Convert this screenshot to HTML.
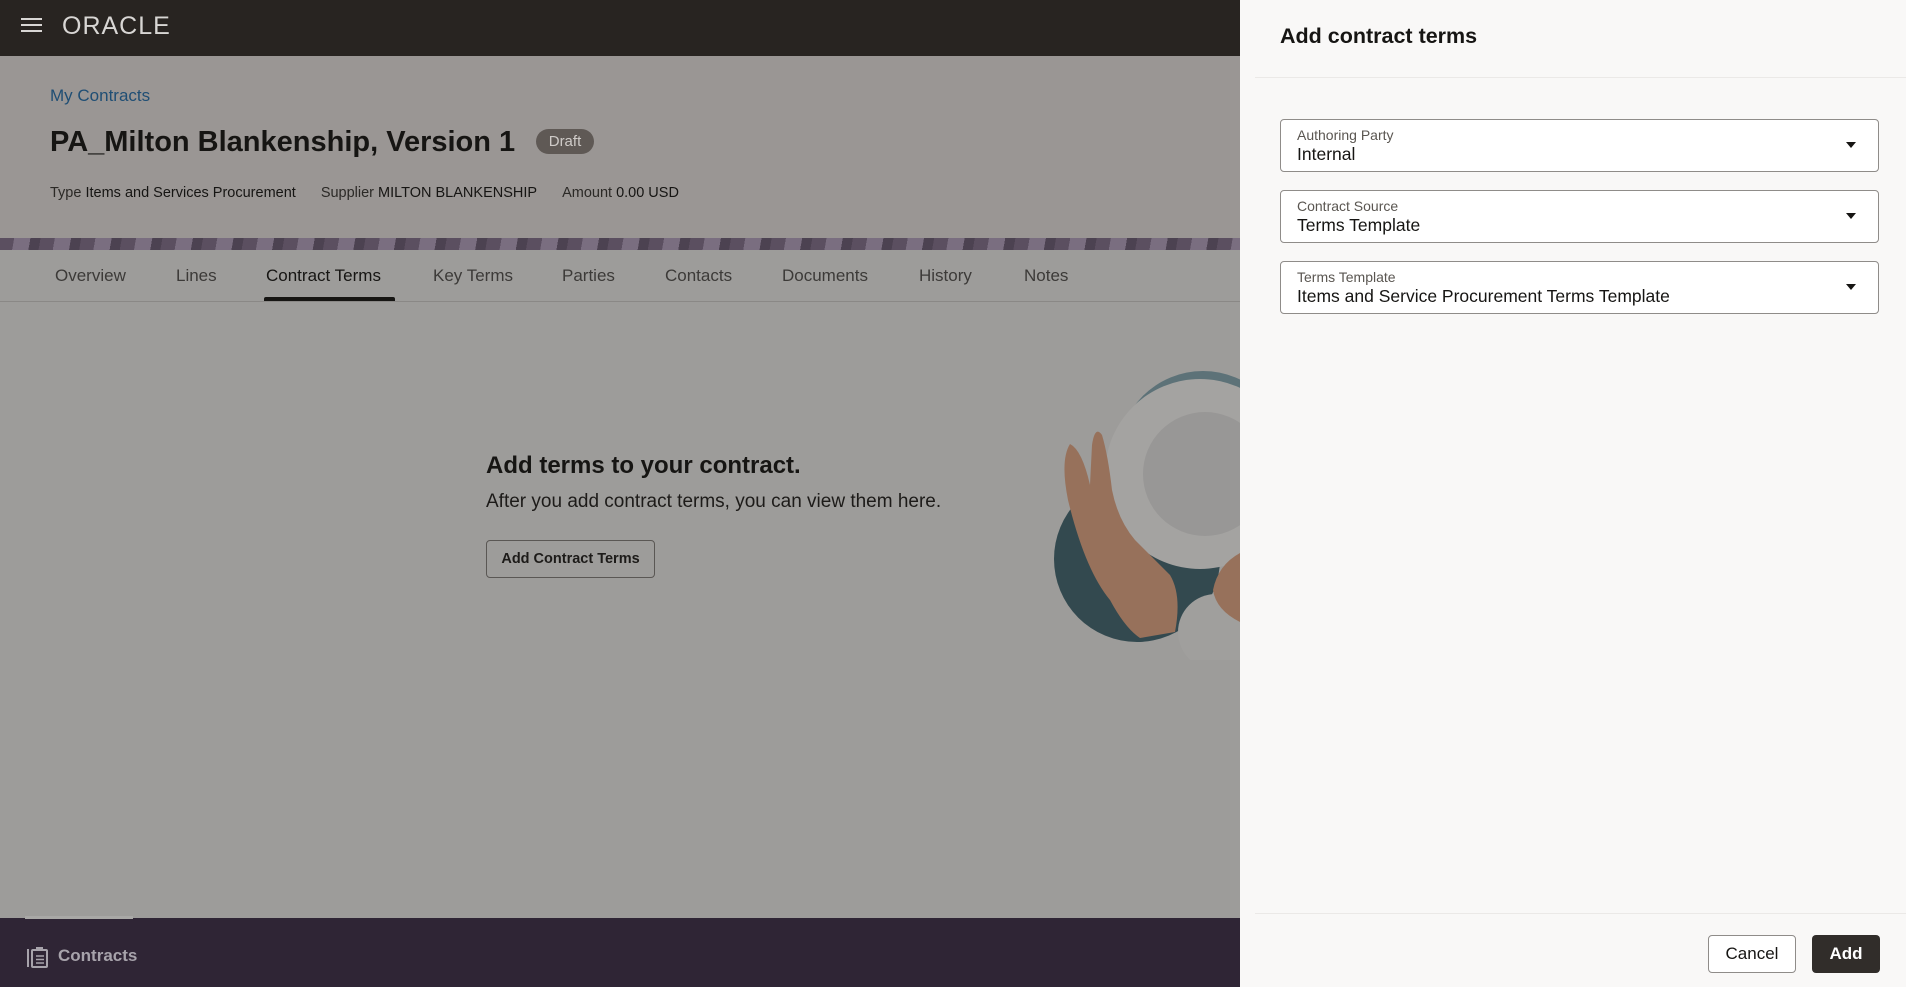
<!DOCTYPE html>
<html><head><meta charset="utf-8"><style>
*{margin:0;padding:0;box-sizing:border-box}
body{width:1906px;height:987px;overflow:hidden;font-family:"Liberation Sans",sans-serif;background:#9d9c9a;position:relative}
.abs{position:absolute}
.top{left:0;top:0;width:1240px;height:56px;background:#282421}
.hdr{left:0;top:56px;width:1240px;height:182px;background:#9a9694}
.strip{left:0;top:238px;width:1240px;height:12px;background:repeating-linear-gradient(100deg,#5b4f60 0 14px,#7a6e80 14px 30px,#4c4251 30px 40px)}
.tabs{left:0;top:250px;width:1240px;height:52px;border-bottom:1px solid #8a8886;background:#9d9c9a}
.tab{position:absolute;top:16px;font-size:17px;color:#3c3a38}
.bot{left:0;top:918px;width:1240px;height:69px;background:#2f2535}
.panel{left:1240px;top:0;width:666px;height:987px;background:#f9f8f7}
.field{position:absolute;left:40px;width:599px;height:53px;background:#fff;border:1px solid #8f8c89;border-radius:4px}
.field .l{position:absolute;left:16px;top:7px;font-size:14px;color:#5a5651}
.field .v{position:absolute;left:16px;top:24px;font-size:17.5px;color:#161513}
.field .c{position:absolute;right:22px;top:22px;width:0;height:0;border-left:5px solid transparent;border-right:5px solid transparent;border-top:6px solid #161513}
</style></head><body>
<div class="abs top">
 <div class="abs" style="left:21px;top:18px;width:21px;height:2px;background:#d8d6d4;box-shadow:0 6px 0 #d8d6d4,0 12px 0 #d8d6d4"></div>
 <div class="abs" style="left:62px;top:12px;font-size:25px;color:#d8d6d4;letter-spacing:1px">ORACLE</div>
</div>
<div class="abs hdr">
 <div class="abs" style="left:50px;top:30px;font-size:17px;color:#1f4e74">My Contracts</div>
 <div class="abs" style="left:50px;top:70px;font-size:29px;font-weight:bold;color:#161513">PA_Milton Blankenship, Version 1</div>
 <div class="abs" style="left:536px;top:73px;width:58px;height:25px;border-radius:13px;background:#5f5955;color:#cfcbc8;font-size:15px;text-align:center;line-height:25px">Draft</div>
 <div class="abs" style="left:50px;top:129px;font-size:14.5px;color:#2b2926">Type <span style="color:#161513">Items and Services Procurement</span><span style="display:inline-block;width:25px"></span>Supplier <span style="color:#161513">MILTON BLANKENSHIP</span><span style="display:inline-block;width:25px"></span>Amount <span style="color:#161513">0.00 USD</span></div>
</div>
<div class="abs strip"></div>
<div class="abs tabs">
 <span class="tab" style="left:55px">Overview</span>
 <span class="tab" style="left:176px">Lines</span>
 <span class="tab" style="left:266px;color:#161513">Contract Terms</span>
 <div class="abs" style="left:264px;top:47px;width:131px;height:4px;background:#161513;border-radius:2px 2px 0 0"></div>
 <span class="tab" style="left:433px">Key Terms</span>
 <span class="tab" style="left:562px">Parties</span>
 <span class="tab" style="left:665px">Contacts</span>
 <span class="tab" style="left:782px">Documents</span>
 <span class="tab" style="left:919px">History</span>
 <span class="tab" style="left:1024px">Notes</span>
</div>
<div class="abs" style="left:486px;top:452px;font-size:24px;font-weight:bold;color:#161513">Add terms to your contract.</div>
<div class="abs" style="left:486px;top:491px;font-size:19px;color:#1d1b19">After you add contract terms, you can view them here.</div>
<div class="abs" style="left:486px;top:540px;width:169px;height:38px;border:1px solid #5a5754;border-radius:4px;font-size:14.5px;font-weight:bold;color:#1d1b19;text-align:center;line-height:36px">Add Contract Terms</div>
<svg class="abs" style="left:1050px;top:370px" width="190" height="290">
 <circle cx="153" cy="86" r="85" fill="#5d7278"/>
 <circle cx="87" cy="189" r="83" fill="#33494f"/>
 <circle cx="150" cy="104" r="95" fill="#a4a3a1"/>
 <circle cx="155" cy="104" r="62" fill="#989796"/>
 <circle cx="166" cy="262" r="38" fill="#a09f9d"/>
 <path d="M20 74 Q10 90 18 130 Q35 200 60 230 Q75 258 90 268 L125 262 Q132 225 120 205 Q100 185 85 170 Q68 150 62 120 Q58 85 52 65 Q45 55 42 75 L40 115 Q32 80 20 74Z" fill="#97715b"/>
 <path d="M190 183 Q168 195 163 220 Q166 240 190 252Z" fill="#97715b"/>
</svg>
<div class="abs bot">
 <div class="abs" style="left:25px;top:-2px;width:108px;height:3px;background:#a9a8a6"></div>
 <svg class="abs" style="left:27px;top:29px" width="22" height="21"><rect x="0" y="2" width="2" height="18" fill="#a7a3ab"/><rect x="5" y="3" width="15" height="17" rx="1" fill="none" stroke="#a7a3ab" stroke-width="2"/><rect x="9" y="0" width="7" height="4" fill="#a7a3ab"/><path d="M9 9h8M9 12.5h8M9 16h8" stroke="#a7a3ab" stroke-width="1.6"/></svg>
 <div class="abs" style="left:58px;top:28px;font-size:17px;font-weight:bold;color:#a7a3ab">Contracts</div>
</div>
<div class="abs panel">
 <div class="abs" style="left:40px;top:24px;font-size:21.5px;font-weight:bold;color:#161513">Add contract terms</div>
 <div class="abs" style="left:15px;top:77px;width:651px;height:1px;background:#ebe9e7"></div>
 <div class="field" style="top:119px"><div class="l">Authoring Party</div><div class="v">Internal</div><div class="c"></div></div>
 <div class="field" style="top:190px"><div class="l">Contract Source</div><div class="v">Terms Template</div><div class="c"></div></div>
 <div class="field" style="top:261px"><div class="l">Terms Template</div><div class="v">Items and Service Procurement Terms Template</div><div class="c"></div></div>
 <div class="abs" style="left:15px;top:913px;width:651px;height:1px;background:#ebe9e7"></div>
 <div class="abs" style="left:468px;top:935px;width:88px;height:38px;border:1px solid #8f8c89;border-radius:4px;background:#fff;font-size:17px;color:#161513;text-align:center;line-height:36px">Cancel</div>
 <div class="abs" style="left:572px;top:935px;width:68px;height:38px;border-radius:4px;background:#312d2a;font-size:17px;font-weight:bold;color:#fff;text-align:center;line-height:38px">Add</div>
</div>
</body></html>
